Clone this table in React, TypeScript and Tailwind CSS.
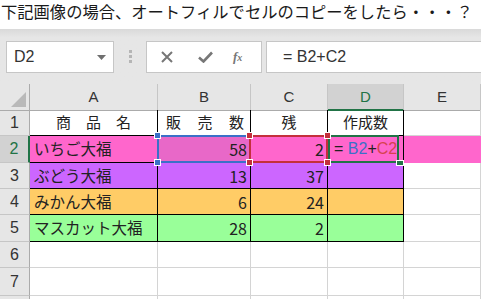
const jp = { fontFamily: '"Noto Sans CJK JP", "Noto Sans", sans-serif' };
const sans = { fontFamily: '"Liberation Sans", Arial, sans-serif' };

type Row = {
  n: number;
  h: string;
  bg: string;
  a?: string;
  b?: string;
  c?: string;
  data: boolean;
};

const rows: Row[] = [
  { n: 1, h: 'h-[26px]', bg: 'bg-white', data: true },
  { n: 2, h: 'h-[27px]', bg: 'bg-[#ff66cc]', a: 'いちご大福', b: '58', c: '2', data: true },
  { n: 3, h: 'h-[26px]', bg: 'bg-[#cc66ff]', a: 'ぶどう大福', b: '13', c: '37', data: true },
  { n: 4, h: 'h-[26px]', bg: 'bg-[#ffcc66]', a: 'みかん大福', b: '6', c: '24', data: true },
  { n: 5, h: 'h-[27px]', bg: 'bg-[#99ff99]', a: 'マスカット大福', b: '28', c: '2', data: true },
  { n: 6, h: 'h-[26px]', bg: 'bg-white', data: false },
  { n: 7, h: 'h-[28px]', bg: 'bg-white', data: false },
  { n: 8, h: 'h-[26px]', bg: 'bg-white', data: false },
];

const cols = 'grid grid-cols-[30px_128px_93px_77px_76px_77px]';

const Handle = ({ pos, color }: { pos: string; color: string }) => (
  <div className={`absolute z-20 h-[7px] w-[7px] border border-white ${color} ${pos}`} />
);

function Toolbar() {
  return (
    <div className="flex h-[55px] items-start gap-0 bg-gradient-to-b from-[#d9d9d9] via-[#e6e6e6] via-[15%] to-[#e6e6e6] pt-[12px] pl-[6px]">
      <div className="flex h-[32px] w-[108px] items-center justify-between border border-[#c6c6c6] bg-white pl-[7px] pr-[7px]">
        <span className="text-[16px] text-[#333]" style={sans}>D2</span>
        <svg width="9" height="5" viewBox="0 0 9 5"><path d="M0 0h9L4.5 5z" fill="#6f6f6f" /></svg>
      </div>
      <div className="flex w-[32px] flex-col items-center gap-[2px] pt-[9px]">
        <div className="h-[3px] w-[3px] bg-[#b5b5b5]" />
        <div className="h-[3px] w-[3px] bg-[#b5b5b5]" />
        <div className="h-[3px] w-[3px] bg-[#b5b5b5]" />
      </div>
      <div className="flex h-[32px] w-[116px] items-center border border-[#c6c6c6] bg-white pl-[14px]">
        <svg width="12" height="12" viewBox="0 0 12 12" className="mr-[25px]">
          <path d="M1 1l10 10M11 1L1 11" stroke="#777" strokeWidth="2" />
        </svg>
        <svg width="15" height="12" viewBox="0 0 15 12" className="mr-[20px]">
          <path d="M1 6.5l4.5 4L14 1.5" stroke="#777" strokeWidth="2.6" fill="none" />
        </svg>
        <span className="text-[13px] font-bold italic text-[#777]" style={{ fontFamily: '"Liberation Serif", serif' }}>
          f<span className="text-[10px]">x</span>
        </span>
      </div>
      <div className="ml-[4px] flex h-[32px] flex-1 items-center border border-r-0 border-[#c6c6c6] bg-white pl-[16px]">
        <span className="text-[16px] text-[#333]" style={sans}>= B2+C2</span>
      </div>
    </div>
  );
}

function HeaderRow() {
  const letters = ['A', 'B', 'C', 'D', 'E'];
  return (
    <div className={`${cols} h-[26px] bg-[#e6e6e6]`} style={sans}>
      <div className="relative border-r border-b border-[#ababab]">
        <svg className="absolute right-[3px] bottom-[3px]" width="15" height="15" viewBox="0 0 15 15">
          <path d="M15 0V15H0z" fill="#b9b9b9" />
        </svg>
      </div>
      {letters.map((l) =>
        l === 'D' ? (
          <div key={l} className="flex items-center justify-center border-r border-b-2 border-r-[#c6c6c6] border-b-[#217346] bg-[#d2d2d2] pt-[2px] text-[15px] text-[#217346]">
            {l}
          </div>
        ) : (
          <div key={l} className="flex items-center justify-center border-r border-b border-r-[#c6c6c6] border-b-[#ababab] text-[15px] text-[#333]">
            {l}
          </div>
        )
      )}
    </div>
  );
}

function DataRow({ r }: { r: Row }) {
  const sel = r.n === 2;
  const line = r.data ? 'border-r border-b border-black' : 'border-r border-b border-[#d4d4d4]';
  return (
    <div className={`${cols} ${r.h}`} style={jp}>
      {sel ? (
        <div className="flex items-center justify-center border-r-2 border-b border-r-[#217346] border-b-[#c6c6c6] bg-[#d2d2d2] text-[16px] text-[#217346]" style={sans}>
          {r.n}
        </div>
      ) : (
        <div className="flex items-center justify-center border-r border-b border-r-[#ababab] border-b-[#c6c6c6] bg-[#e6e6e6] text-[16px] text-[#333]" style={sans}>
          {r.n < 8 ? r.n : ''}
        </div>
      )}

      {r.n === 1 ? (
        <>
          <div className={`flex items-center justify-between px-[26px] text-[15px] text-[#222] ${line}`}>
            <span>商</span><span>品</span><span>名</span>
          </div>
          <div className={`flex items-center justify-between pl-[8px] pr-[6px] text-[15px] text-[#222] ${line}`}>
            <span>販</span><span>売</span><span>数</span>
          </div>
          <div className={`flex items-center justify-center text-[15px] text-[#222] ${line}`}>残</div>
          <div className={`flex items-center justify-center text-[15px] text-[#222] ${line}`}>作成数</div>
          <div className="border-r border-b border-[#d4d4d4]" />
        </>
      ) : (
        <>
          <div className={`flex items-center pl-[4px] text-[15.5px] text-[#222] ${r.bg} ${line}`}>{r.a}</div>
          <div className={`relative flex items-center justify-end pr-[3px] text-[16px] text-[#222] ${sel ? 'bg-[#e868c8]' : r.bg} ${line}`}>
            {sel && (
              <>
                <div className="absolute -top-px -left-px -right-px -bottom-px z-10 border-2 border-[#3b70c8]" />
                <Handle pos="-top-[4px] -left-[4px]" color="bg-[#3b70c8]" />
                <Handle pos="-bottom-[4px] -left-[4px]" color="bg-[#3b70c8]" />
              </>
            )}
            <span className="relative z-20">{r.b}</span>
          </div>
          <div className={`relative flex items-center justify-end pr-[3px] text-[16px] text-[#222] ${r.bg} ${line}`}>
            {sel && (
              <>
                <div className="absolute -top-px -left-[2px] -right-px -bottom-px z-10 border-2 border-[#c4303c]" />
                <Handle pos="-top-[4px] -left-[5px]" color="bg-[#c4303c]" />
                <Handle pos="-bottom-[4px] -left-[5px]" color="bg-[#c4303c]" />
                <Handle pos="-top-[4px] -right-[4px]" color="bg-[#c4303c]" />
                <Handle pos="-bottom-[4px] -right-[4px]" color="bg-[#c4303c]" />
              </>
            )}
            <span className="relative z-20">{r.c}</span>
          </div>
          <div className={`relative flex items-center ${r.data ? r.bg : ''} ${line}`}>
            {sel && (
              <>
                <div className="absolute -top-px left-0 -bottom-px z-10 w-[71px] border-2 border-[#217346]" />
                <div className="absolute -bottom-[4px] left-[68px] z-20 h-[6px] w-[8px] border border-white bg-[#217346]" />
                <span className="relative z-20 pl-[6px] text-[16px] text-[#222]" style={sans}>
                  = <span className="text-[#3b70c8]">B2</span>+<span className="text-[#d6434f]">C2</span>
                </span>
              </>
            )}
          </div>
          <div className={sel ? 'bg-[#ff66cc]' : 'border-r border-b border-[#d4d4d4]'} />
        </>
      )}
    </div>
  );
}

export default function App() {
  return (
    <div className="h-[299px] w-[481px] overflow-hidden bg-white">
      <div className="h-[29px] pl-[1px] text-[16.3px] leading-[22px] text-[#1a1a1a]" style={jp}>
        下記画像の場合、オートフィルでセルのコピーをしたら・・・？
      </div>
      <Toolbar />
      <HeaderRow />
      {rows.map((r) => (
        <DataRow key={r.n} r={r} />
      ))}
    </div>
  );
}
